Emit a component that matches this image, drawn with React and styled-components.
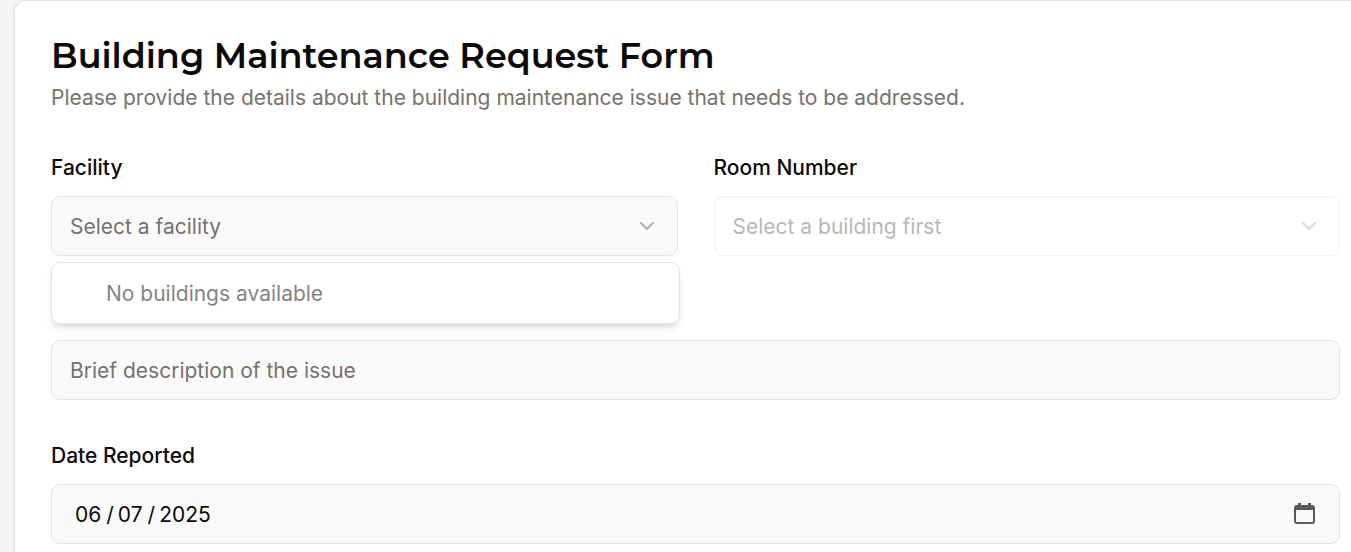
import React, { useState } from "react";
import styled, { createGlobalStyle, css } from "styled-components";
import { ChevronDown } from "lucide-react";

const GlobalStyle = createGlobalStyle`
  *, *::before, *::after { box-sizing: border-box; }
  body {
    margin: 0;
    background: #f3f4f6;
    color: #0c0a09;
    font-family: Inter, "Liberation Sans", sans-serif;
    font-size: 21px;
    line-height: 30px;
  }
`;

const Page = styled.main`
  display: flex;
  min-height: 100vh;
  padding-left: 14px;
`;

const Card = styled.section`
  flex: 1;
  min-width: 0;
  padding: 37px 11px 8px 36px;
  background: #fff;
  border: 1px solid #e5e5e5;
  border-width: 1px 0 0 1px;
  border-top-left-radius: 12px;
  box-shadow: 0 1px 3px rgba(0, 0, 0, 0.1);
`;

const Header = styled.header`
  display: grid;
  gap: 9px;
  margin-bottom: 44px;
`;

const Title = styled.h1`
  margin: 0;
  font-family: Montserrat, Inter, sans-serif;
  font-size: 35px;
  font-weight: 600;
  line-height: 36px;
`;

const Subtitle = styled.p`
  margin: 0;
  color: #78716c;
`;

const Form = styled.form`
  display: grid;
  gap: 45px;
`;

const Columns = styled.div`
  display: grid;
  grid-template-columns: 1fr 1fr;
  gap: 36px;
`;

const Field = styled.div`
  position: relative;
  display: grid;
  gap: 18px;
  padding-top: ${(p) => (p.$unlabelled ? "39px" : "0")};
`;

const Label = styled.label`
  font-weight: 500;
  line-height: 21px;
`;

const Control = styled.div`
  display: grid;
  align-items: center;
  opacity: ${(p) => (p.$disabled ? 0.5 : 1)};

  > * { grid-area: 1 / 1; }
  > svg {
    justify-self: end;
    pointer-events: none;
  }
`;

const box = css`
  width: 100%;
  height: 60px;
  margin: 0;
  padding: 0 18px;
  border: 1px solid #e5e5e5;
  border-radius: 9px;
  outline: none;
  background: #fafafa;
  color: #0c0a09;
  font: inherit;
`;

const Select = styled.select`
  ${box}
  appearance: none;
  padding-top: 2px;
  color: #78716c;
  opacity: 1;
  &:disabled { background: #fff; }
`;

const TextInput = styled.input`
  ${box}
  &::placeholder { color: #78716c; opacity: 1; }
`;

const DateInput = styled.input`
  ${box}
  padding-top: 2px;
  padding-left: 22px;
  &::-webkit-datetime-edit-text { padding: 0 3px 0 4px; }
  &::-webkit-calendar-picker-indicator { opacity: 0; }
`;

const Chevron = styled(ChevronDown)`
  margin-right: 19px;
  color: #0c0a09;
  opacity: 0.3;
`;

const Menu = styled.ul`
  position: absolute;
  z-index: 1;
  top: calc(100% + 6px);
  left: 0;
  right: -2px;
  margin: 0;
  padding: 16px 54px 14px;
  list-style: none;
  background: #fff;
  border: 1px solid #e5e5e5;
  border-radius: 9px;
  box-shadow: 0 6px 9px -2px rgba(0, 0, 0, 0.1), 0 3px 6px -3px rgba(0, 0, 0, 0.1);
`;

const MenuItem = styled.li`
  color: #858484;
`;

const CalendarSvg = styled.svg`
  margin-right: 23px;
`;

function CalendarIcon() {
  return (
    <CalendarSvg width="24" height="24" viewBox="0 0 24 24" fill="none" aria-hidden="true">
      <rect x="2" y="4" width="19" height="17" rx="2" stroke="#5b5a59" strokeWidth="2" />
      <path d="M2 4h19v4H2zM5 1h3v3H5zM15 1h3v3h-3z" fill="#5b5a59" />
    </CalendarSvg>
  );
}

export default function App() {
  const [date, setDate] = useState("2025-06-07");
  const [issue, setIssue] = useState("");

  return (
    <>
      <GlobalStyle />
      <Page>
        <Card>
          <Header>
            <Title>Building Maintenance Request Form</Title>
            <Subtitle>
              Please provide the details about the building maintenance issue that needs to be
              addressed.
            </Subtitle>
          </Header>
          <Form>
            <Columns>
              <Field>
                <Label htmlFor="facility">Facility</Label>
                <Control>
                  <Select id="facility">
                    <option>Select a facility</option>
                  </Select>
                  <Chevron size={24} />
                </Control>
                <Menu role="listbox" aria-label="Facility">
                  <MenuItem role="option" aria-disabled="true">
                    No buildings available
                  </MenuItem>
                </Menu>
              </Field>
              <Field>
                <Label htmlFor="room">Room Number</Label>
                <Control $disabled>
                  <Select id="room" disabled>
                    <option>Select a building first</option>
                  </Select>
                  <Chevron size={24} />
                </Control>
              </Field>
            </Columns>
            <Field $unlabelled>
              <TextInput
                aria-label="Brief description of the issue"
                placeholder="Brief description of the issue"
                value={issue}
                onChange={(e) => setIssue(e.target.value)}
              />
            </Field>
            <Field>
              <Label htmlFor="date">Date Reported</Label>
              <Control>
                <DateInput
                  id="date"
                  type="date"
                  value={date}
                  onChange={(e) => setDate(e.target.value)}
                />
                <CalendarIcon />
              </Control>
            </Field>
          </Form>
        </Card>
      </Page>
    </>
  );
}
